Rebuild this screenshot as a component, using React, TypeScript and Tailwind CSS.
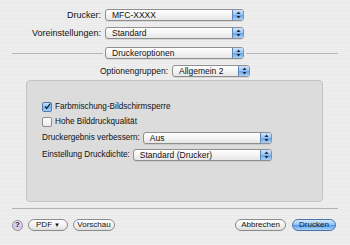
import type { ReactNode } from "react";

function Arrows() {
    return (
        <svg width="5" height="8" viewBox="0 0 5 8" className="block">
            <path d="M2.5 0.5 L4.5 3 L0.5 3 Z" fill="#1e2a3a" />
            <path d="M2.5 7.5 L4.5 5 L0.5 5 Z" fill="#1e2a3a" />
        </svg>
    );
}

function Popup({ text, className }: { text: string; className?: string }) {
    return (
        <div
            className={`flex h-[12px] items-stretch overflow-hidden rounded-[3px] border border-[#8f8f8f] bg-[linear-gradient(180deg,#ffffff_0%,#f4f4f4_50%,#e6e6e6_100%)] shadow-[0_1px_0_rgba(0,0,0,0.08)] ${className ?? ""}`}
        >
            <span className="flex-1 truncate pl-[6px] text-[8.5px] leading-[10px] text-[#111]">
                {text}
            </span>
            <div className="flex w-[11px] items-center justify-center border-l border-[#5d86b8] bg-[linear-gradient(180deg,#cfe4fb_0%,#9cc6f2_45%,#6ea8e6_55%,#a9d2f8_100%)]">
                <Arrows />
            </div>
        </div>
    );
}

function Pill({ children, className, blue }: { children: ReactNode; className?: string; blue?: boolean }) {
    return (
        <div
            className={`flex h-[12px] items-center justify-center rounded-full border text-[8px] leading-none ${
                blue ?
                    "border-[#4a74a8] bg-[linear-gradient(180deg,#d6e9fd_0%,#93c3f3_45%,#5d9ee6_55%,#a8d4fb_100%)] text-[#0d1a2b]"
                :   "border-[#8b8b8b] bg-[linear-gradient(180deg,#ffffff_0%,#f3f3f3_50%,#dedede_100%)] text-[#111]"
            } ${className ?? ""}`}
        >
            {children}
        </div>
    );
}

function Check({ on, label }: { on?: boolean; label: string }) {
    return (
        <div className="flex h-[10px] items-center">
            <div
                className={`flex h-[10px] w-[10px] items-center justify-center rounded-[2px] border ${
                    on ?
                        "border-[#4f78aa] bg-[linear-gradient(180deg,#cfe3fa_0%,#7fb2ec_55%,#a8d0f8_100%)]"
                    :   "border-[#8e8e8e] bg-[linear-gradient(180deg,#ffffff_0%,#ececec_100%)]"
                }`}
            >
                {on && (
                    <svg width="9" height="9" viewBox="0 0 9 9" className="-mt-[2px] ml-[1px]">
                        <path d="M1.5 4.5 L3.5 7 L8 0.8" stroke="#14243a" strokeWidth="1.6" fill="none" />
                    </svg>
                )}
            </div>
            <span className="ml-[3px] text-[8.2px] leading-none text-[#111]">{label}</span>
        </div>
    );
}

export default function App() {
    return (
        <div className="relative h-[245px] w-[350px] overflow-hidden bg-[repeating-linear-gradient(180deg,#efefef_0px,#efefef_1px,#e9e9e9_1px,#e9e9e9_2px)] pt-[9px] font-['Liberation_Sans',Arial,sans-serif] text-[#111]">
            {/* printer + presets */}
            <div className="flex h-[12px] items-center">
                <span className="w-[101px] text-right text-[9px] leading-none">Drucker:</span>
                <Popup text="MFC-XXXX" className="ml-[4px] w-[139px]" />
            </div>
            <div className="mt-[6px] flex h-[12px] items-center">
                <span className="w-[101px] text-right text-[9px] leading-none">Voreinstellungen:</span>
                <Popup text="Standard" className="ml-[4px] w-[139px]" />
            </div>

            {/* pane selector */}
            <div className="mt-[8px] flex h-[12px] items-center">
                <div className="ml-[12px] h-px w-[91px] bg-[#b4b4b4]" />
                <Popup text="Druckeroptionen" className="ml-[2px] w-[139px]" />
                <div className="ml-[2px] h-px w-[92px] bg-[#b4b4b4]" />
            </div>

            <div className="mt-[6px] flex h-[12px] items-center">
                <span className="w-[168px] text-right text-[8.5px] leading-none">Optionengruppen:</span>
                <Popup text="Allgemein 2" className="ml-[4px] w-[78px]" />
            </div>

            {/* options box */}
            <div className="ml-[26px] mt-[3px] h-[122px] w-[297px] rounded-[4px] border border-[#c3c3c3] bg-[#dcdcdc] pl-[15px] pt-[21px]">
                <Check on label="Farbmischung-Bildschirmsperre" />
                <div className="mt-[5px]">
                    <Check label="Hohe Bilddruckqualität" />
                </div>
                <div className="mt-[5px] flex h-[12px] w-[230px] items-center">
                    <span className="shrink-0 text-[8.2px] leading-none">Druckergebnis verbessern:</span>
                    <Popup text="Aus" className="ml-[3px] flex-1" />
                </div>
                <div className="mt-[5px] flex h-[12px] w-[230px] items-center">
                    <span className="shrink-0 text-[8.2px] leading-none">Einstellung Druckdichte:</span>
                    <Popup text="Standard (Drucker)" className="ml-[3px] flex-1" />
                </div>
            </div>

            <div className="ml-[12px] mt-[6px] h-px w-[326px] bg-[#b4b4b4]" />

            {/* buttons */}
            <div className="mt-[10px] flex h-[12px] items-center pl-[12px] pr-[14px]">
                <div className="flex h-[11px] w-[11px] items-center justify-center rounded-full border border-[#8a8a8a] bg-[linear-gradient(180deg,#f1e9fd_0%,#d4c3f0_60%,#e6dcfa_100%)] text-[8px] font-bold leading-none text-[#222]">
                    ?
                </div>
                <Pill className="ml-[5px] w-[40px]">
                    PDF <span className="ml-[2px] text-[6px]">▼</span>
                </Pill>
                <Pill className="ml-[5px] w-[42px]">Vorschau</Pill>
                <div className="flex-1" />
                <Pill className="w-[51px]">Abbrechen</Pill>
                <Pill blue className="ml-[6px] w-[44px]">
                    Drucken
                </Pill>
            </div>
        </div>
    );
}
